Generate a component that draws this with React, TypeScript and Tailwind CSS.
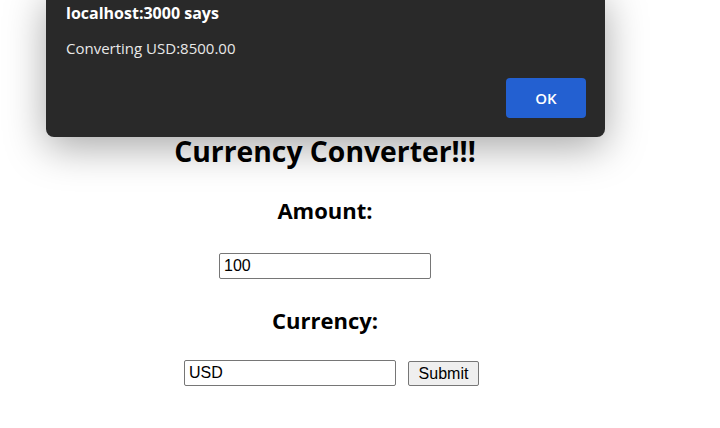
import React from 'react';

const App: React.FC = () => {
  return (
    <div className="relative w-[720px] h-[428px] overflow-hidden bg-white">
      {/* Page content */}
      <div className="w-[650px] flex flex-col items-center text-black font-['Open_Sans',sans-serif]">
        <h1 className="mt-[133px] text-[28.3px] leading-[36px] font-bold">Currency Converter!!!</h1>
        <h2 className="mt-[27px] text-[22px] leading-[28px] font-bold">Amount:</h2>
        <input
          type="text"
          defaultValue="100"
          className="mt-[29px] w-[212px] h-[26px] px-[4px] border border-[#767676] rounded-[2px] text-[16px] font-['Liberation_Sans',Arial,sans-serif] text-black"
        />
        <h2 className="mt-[27px] text-[22px] leading-[28px] font-bold">Currency:</h2>
        <div className="mt-[26px] flex items-center gap-[12px] pl-[13px]">
          <input
            type="text"
            defaultValue="USD"
            className="w-[212px] h-[26px] px-[4px] border border-[#767676] rounded-[2px] text-[16px] font-['Liberation_Sans',Arial,sans-serif] text-black"
          />
          <button className="w-[71px] h-[25px] border border-[#767676] rounded-[2px] bg-[#efefef] text-[16px] font-['Liberation_Sans',Arial,sans-serif] text-black">
            Submit
          </button>
        </div>
      </div>

      {/* Browser alert dialog */}
      <div className="absolute left-[46px] -top-[10px] w-[559px] h-[147px] rounded-lg bg-[#292929] shadow-[0_10px_40px_rgba(0,0,0,0.35)] font-['Open_Sans',sans-serif]">
        <div className="pt-[12px] pl-[20px] text-[16px] leading-[22px] font-bold text-white">localhost:3000 says</div>
        <div className="mt-[14px] pl-[20px] text-[15px] leading-[20px] text-[#e8e8e8]">Converting USD:8500.00</div>
        <div className="flex justify-end pr-[19px] mt-[20px]">
          <button className="w-[80px] h-[40px] rounded-[4px] bg-[#2360d1] text-white text-[15px] font-semibold">OK</button>
        </div>
      </div>
    </div>
  );
};

export default App;
